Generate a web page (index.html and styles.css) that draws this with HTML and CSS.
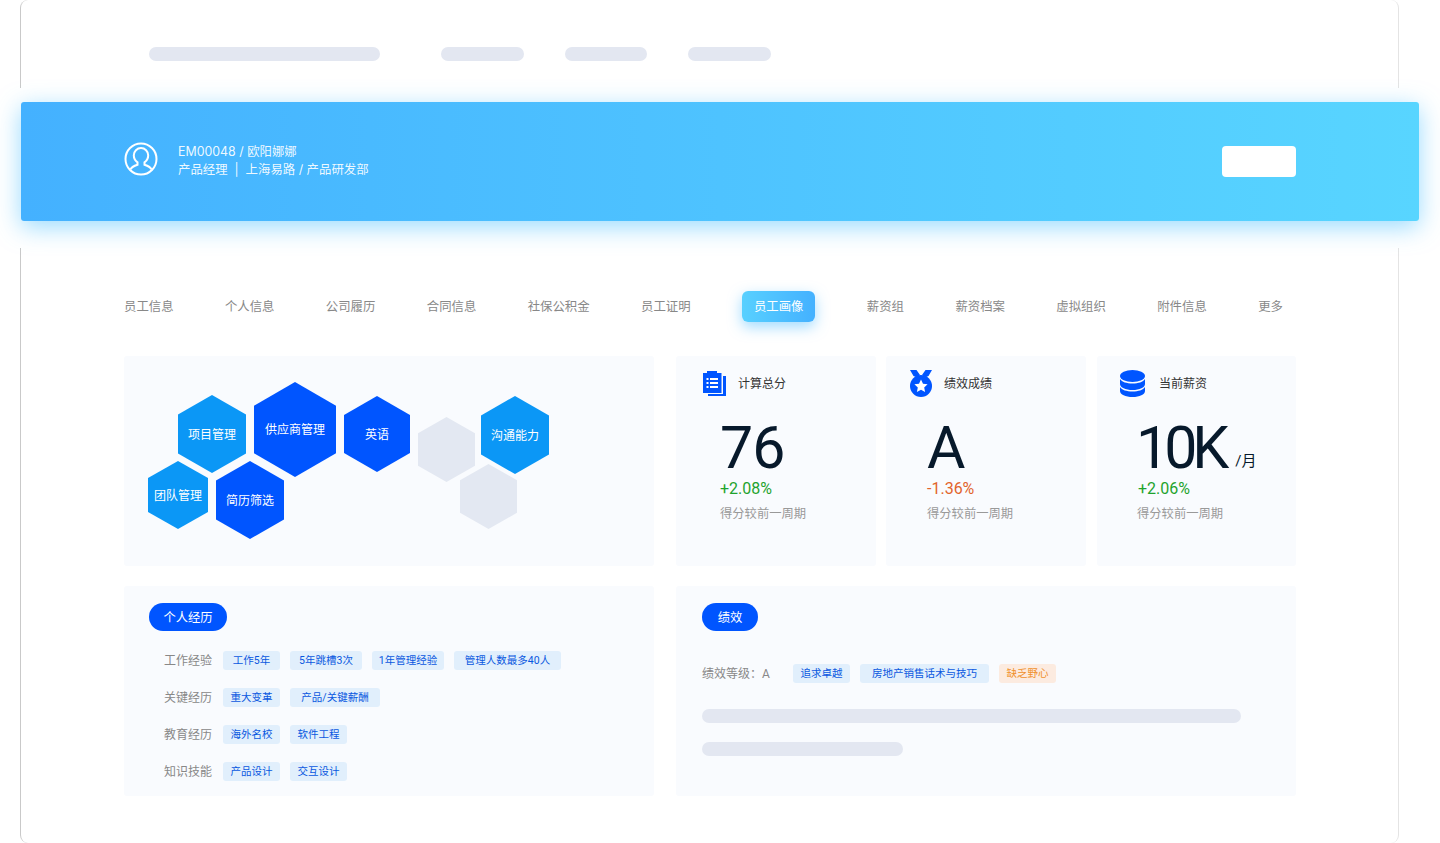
FILE: index.html
```html
<!DOCTYPE html>
<html lang="zh-CN">
<head>
    <meta charset="UTF-8">
    <meta name="viewport" content="width=device-width, initial-scale=1.0">
    <title>员工画像</title>
    <link rel="stylesheet" href="styles.css">
</head>
<body>
    <div class="frame">
        <div class="top-bar">
            <div class="bar bar-title"></div>
            <div class="bar bar-nav"></div>
            <div class="bar bar-nav"></div>
            <div class="bar bar-nav"></div>
        </div>

        <div class="banner-wrap">
            <div class="banner">
                <svg class="avatar" viewBox="0 0 34 34" fill="none" stroke="#fff" stroke-width="2">
                    <circle cx="17" cy="17" r="15.5"/>
                    <path d="M6.500 27.500c1-2.600 3.600-3.700 7-4.800v-2.400c-2.200-1.500-3.700-4-3.700-7a7.200 7.200 0 0 1 14.400 0c0 3-1.500 5.500-3.700 7v2.400c3.400 1.100 6 2.200 7 4.800"/>
                </svg>
                <div class="who">
                    <div>EM00048 / 欧阳娜娜</div>
                    <div>产品经理&nbsp;&nbsp;|&nbsp;&nbsp;上海易路 / 产品研发部</div>
                </div>
                <div class="banner-btn"></div>
            </div>
        </div>

        <div class="content">
            <div class="tabs">
                <span class="tab">员工信息</span>
                <span class="tab">个人信息</span>
                <span class="tab">公司履历</span>
                <span class="tab">合同信息</span>
                <span class="tab">社保公积金</span>
                <span class="tab">员工证明</span>
                <span class="tab active">员工画像</span>
                <span class="tab">薪资组</span>
                <span class="tab">薪资档案</span>
                <span class="tab">虚拟组织</span>
                <span class="tab">附件信息</span>
                <span class="tab">更多</span>
            </div>

            <div class="row-top">
                <div class="card hex-map">
                    <div class="hex sky hex-project">项目管理</div>
                    <div class="hex blue hex-supply">供应商管理</div>
                    <div class="hex blue hex-english">英语</div>
                    <div class="hex grey hex-empty1"></div>
                    <div class="hex sky hex-talk">沟通能力</div>
                    <div class="hex sky hex-team">团队管理</div>
                    <div class="hex blue hex-resume">简历筛选</div>
                    <div class="hex grey hex-empty2"></div>
                </div>

                <div class="stats">
                    <div class="card stat stat-score">
                        <div class="stat-head">
                            <svg class="stat-icon" width="23" height="26" viewBox="0 0 23 26">
                                <path fill="#0055ff" d="M20 6h3v20H5v-2h15z"/>
                                <path fill="#0055ff" d="M0 3h4V1h10v2h4.500v20H0z"/>
                                <path fill="#fff" d="M3.500 8h2v2h-2zM7 8h8v2H7zM3.500 12h2v2h-2zM7 12h8v2H7zM3.500 16h2v2h-2zM7 16h8v2H7z"/>
                            </svg>
                            <span class="stat-title">计算总分</span>
                        </div>
                        <div class="stat-num">76</div>
                        <div class="delta up">+2.08%</div>
                        <div class="stat-note">得分较前一周期</div>
                    </div>
                    <div class="card stat stat-grade">
                        <div class="stat-head">
                            <svg class="stat-icon" width="22" height="27" viewBox="0 0 22 27">
                                <path fill="#0055ff" d="M0 0h6.500l3.500 5-3 2.500L3.500 6zM22 0h-6.500l-3.500 5 3 2.500L18.500 6z"/>
                                <circle cx="11" cy="16" r="11" fill="#0055ff"/>
                                <path fill="#fff" d="M11 9.500l2 4.200 4.600.6-3.400 3.100.9 4.600-4.100-2.300-4.100 2.300.9-4.600-3.400-3.100 4.600-.6z"/>
                            </svg>
                            <span class="stat-title">绩效成绩</span>
                        </div>
                        <div class="stat-num">A</div>
                        <div class="delta down">-1.36%</div>
                        <div class="stat-note">得分较前一周期</div>
                    </div>
                    <div class="card stat stat-salary">
                        <div class="stat-head">
                            <svg class="stat-icon" width="25" height="27" viewBox="0 0 25 27">
                                <ellipse cx="12.500" cy="6" rx="12.500" ry="6" fill="#0055ff"/>
                                <path fill="#0055ff" d="M0 9c2 3 6.500 4.500 12.500 4.500S23 12 25 9v5c0 3.500-5.500 6-12.500 6S0 17.500 0 14z"/>
                                <path fill="#0055ff" d="M0 17c2 3 6.500 4.500 12.500 4.500S23 20 25 17v4c0 3.500-5.500 6-12.500 6S0 24.500 0 21z"/>
                            </svg>
                            <span class="stat-title">当前薪资</span>
                        </div>
                        <div class="stat-num">10K<span class="unit">/月</span></div>
                        <div class="delta up">+2.06%</div>
                        <div class="stat-note">得分较前一周期</div>
                    </div>
                </div>
            </div>

            <div class="row-bottom">
                <div class="card history">
                    <div class="pill">个人经历</div>
                    <div class="tag-row">
                        <span class="tag-label">工作经验</span>
                        <span class="tag w57">工作5年</span>
                        <span class="tag w72">5年跳槽3次</span>
                        <span class="tag w72">1年管理经验</span>
                        <span class="tag w107">管理人数最多40人</span>
                    </div>
                    <div class="tag-row">
                        <span class="tag-label">关键经历</span>
                        <span class="tag w57">重大变革</span>
                        <span class="tag w90">产品/关键薪酬</span>
                    </div>
                    <div class="tag-row">
                        <span class="tag-label">教育经历</span>
                        <span class="tag w57">海外名校</span>
                        <span class="tag w57">软件工程</span>
                    </div>
                    <div class="tag-row">
                        <span class="tag-label">知识技能</span>
                        <span class="tag w57">产品设计</span>
                        <span class="tag w57">交互设计</span>
                    </div>
                </div>

                <div class="card perf">
                    <div class="pill pill-short">绩效</div>
                    <div class="perf-line">
                        <span class="tag-label perf-label">绩效等级：A</span>
                        <span class="tag w57">追求卓越</span>
                        <span class="tag w129">房地产销售话术与技巧</span>
                        <span class="tag tag-warn w57">缺乏野心</span>
                    </div>
                    <div class="bar bar-long"></div>
                    <div class="bar bar-short"></div>
                </div>
            </div>
        </div>
    </div>
</body>
</html>
```

FILE: styles.css
```css
* {
    margin: 0;
    padding: 0;
    box-sizing: border-box;
}

html, body {
    height: 843px;
    overflow: hidden;
}

body {
    background: #fff;
    font-family: Roboto, "Noto Sans CJK SC", sans-serif;
}

.frame {
    width: 1379px;
    height: 843px;
    margin-left: 20px;
    border-left: 1px solid #c9c9c9;
    border-right: 1px solid #e4e4e4;
    border-radius: 8px;
    padding-top: 47px;
}

.bar {
    height: 14px;
    border-radius: 7px;
    background: #e3e7f1;
}

.top-bar {
    display: flex;
    height: 14px;
    padding-left: 128px;
}

.bar-title {
    width: 231px;
    margin-right: 61px;
}

.bar-nav {
    width: 82.500px;
    margin-right: 41px;
}

.banner-wrap {
    width: 1420px;
    height: 160px;
    margin: 27px 0 0 -1px;
    padding: 14px 21px 27px 1px;
    background: #fff;
}

.banner {
    display: flex;
    align-items: center;
    height: 119px;
    padding: 0 123px 0 103px;
    border-radius: 3px;
    background: linear-gradient(90deg, #44b1ff, #58d5ff);
    box-shadow: 0 6px 24px rgba(70, 190, 255, 0.55);
    color: #fff;
}

.avatar {
    width: 34px;
    height: 34px;
    margin-top: -5px;
}

.who {
    flex: 1;
    margin: -1px 0 0 20px;
    font-family: Inter, "Noto Sans CJK SC", sans-serif;
    font-size: 12.400px;
    line-height: 18px;
    color: rgba(255, 255, 255, 0.92);
}

.banner-btn {
    width: 74px;
    height: 31px;
    margin-top: -1px;
    border-radius: 4px;
    background: #fff;
}

.content {
    width: 1172px;
    margin-left: 103px;
}

.tabs {
    display: flex;
    justify-content: space-between;
    align-items: center;
    width: 1159px;
    height: 31px;
    margin-top: 43px;
    font-size: 12.400px;
    color: #888;
}

.tab {
    padding-bottom: 2px;
}

.tab.active {
    display: flex;
    align-items: center;
    height: 31px;
    padding: 0 12px 2px;
    border-radius: 6px;
    background: linear-gradient(90deg, #58d0ff, #44b1ff);
    box-shadow: 0 5px 14px rgba(70, 185, 255, 0.5);
    color: #fff;
}

.row-top, .row-bottom {
    display: flex;
    gap: 22px;
}

.row-top {
    height: 210px;
    margin-top: 34px;
}

.row-bottom {
    height: 210px;
    margin-top: 20px;
}

.card {
    background: #f9fbfe;
    border-radius: 3px;
}

/* hexagon map, each cell has its own place on the canvas */
.hex-map {
    position: relative;
    width: 530px;
    flex-shrink: 0;
}

.hex {
    position: absolute;
    display: flex;
    align-items: center;
    justify-content: center;
    padding-bottom: 2px;
    clip-path: polygon(50% 0, 100% 25%, 100% 75%, 50% 100%, 0 75%, 0 25%);
    color: #fff;
    font-size: 12px;
}

.hex.sky { background: #0b97f6; }
.hex.blue { background: #0055ff; }
.hex.grey { background: #e3e8f2; }

.hex-project { left: 54px; top: 39px; width: 68px; height: 78px; }
.hex-supply { left: 130px; top: 26px; width: 82px; height: 95px; }
.hex-english { left: 220px; top: 40px; width: 66px; height: 76px; }
.hex-empty1 { left: 294px; top: 61px; width: 57px; height: 65px; }
.hex-talk { left: 357px; top: 40px; width: 68px; height: 78px; }
.hex-team { left: 24px; top: 105px; width: 60px; height: 68px; }
.hex-resume { left: 92px; top: 105px; width: 68px; height: 78px; }
.hex-empty2 { left: 336px; top: 108px; width: 57px; height: 65px; }

.stats {
    flex: 1;
    display: flex;
    gap: 10px;
}

.stat {
    width: 200px;
    padding-top: 14px;
}

.stat-score { padding-left: 27px; }
.stat-grade { padding-left: 24px; }

.stat-salary {
    width: 199px;
    margin-left: 1px;
    padding-left: 23px;
}

.stat-head {
    display: flex;
    align-items: center;
    height: 26px;
}

.stat-title {
    margin-left: 12px;
    padding-bottom: 2px;
    font-size: 12px;
    color: #333;
}

.stat-salary .stat-title {
    margin-left: 14px;
}

.stat-num {
    margin: 21px 0 0 17px;
    height: 62px;
    font-size: 59px;
    line-height: 62px;
    color: #07192b;
    letter-spacing: -1px;
    white-space: nowrap;
}

.stat-salary .stat-num {
    margin-left: 16px;
    letter-spacing: -5px;
}

.unit {
    margin-left: 11px;
    font-size: 15px;
    letter-spacing: 0;
    position: relative;
    top: -2px;
}

.delta {
    margin: 0 0 0 17px;
    font-size: 16px;
    line-height: 20px;
}

.stat-salary .delta {
    margin-left: 18px;
}

.delta.up { color: #1fa32d; }
.delta.down { color: #e2642c; }

.stat-note {
    margin: 6px 0 0 17px;
    font-size: 12.300px;
    line-height: 18px;
    color: #999;
}

.history {
    width: 530px;
    flex-shrink: 0;
    padding: 17px 0 0 25px;
}

.perf {
    flex: 1;
    padding: 17px 0 0 26px;
}

.pill {
    width: 78px;
    height: 28px;
    border-radius: 14px;
    background: #0055ff;
    color: #fff;
    font-size: 12.300px;
    line-height: 31px;
    text-align: center;
}

.pill-short {
    width: 56px;
}

.tag-row {
    display: flex;
    align-items: center;
    gap: 10px;
    height: 19px;
    margin: 18px 0 0 15px;
}

.pill + .tag-row {
    margin-top: 20px;
}

.tag-label {
    width: 49px;
    padding-bottom: 2px;
    font-size: 12px;
    color: #888;
    white-space: nowrap;
}

.tag {
    height: 19px;
    border-radius: 3px;
    background: #e1effc;
    color: #0a58e0;
    font-size: 10.500px;
    line-height: 19px;
    text-align: center;
    white-space: nowrap;
}

.w57 { width: 57px; }
.w72 { width: 72px; }
.w90 { width: 90px; }
.w107 { width: 107px; }
.w129 { width: 129px; }

.tag-warn {
    background: #fcebe0;
    color: #f0902a;
}

.perf-line {
    display: flex;
    align-items: center;
    gap: 10px;
    height: 19px;
    margin-top: 33px;
}

.perf-label {
    width: 81px;
}

.bar-long {
    width: 539px;
    margin-top: 26px;
}

.bar-short {
    width: 201px;
    margin-top: 19px;
}
```
